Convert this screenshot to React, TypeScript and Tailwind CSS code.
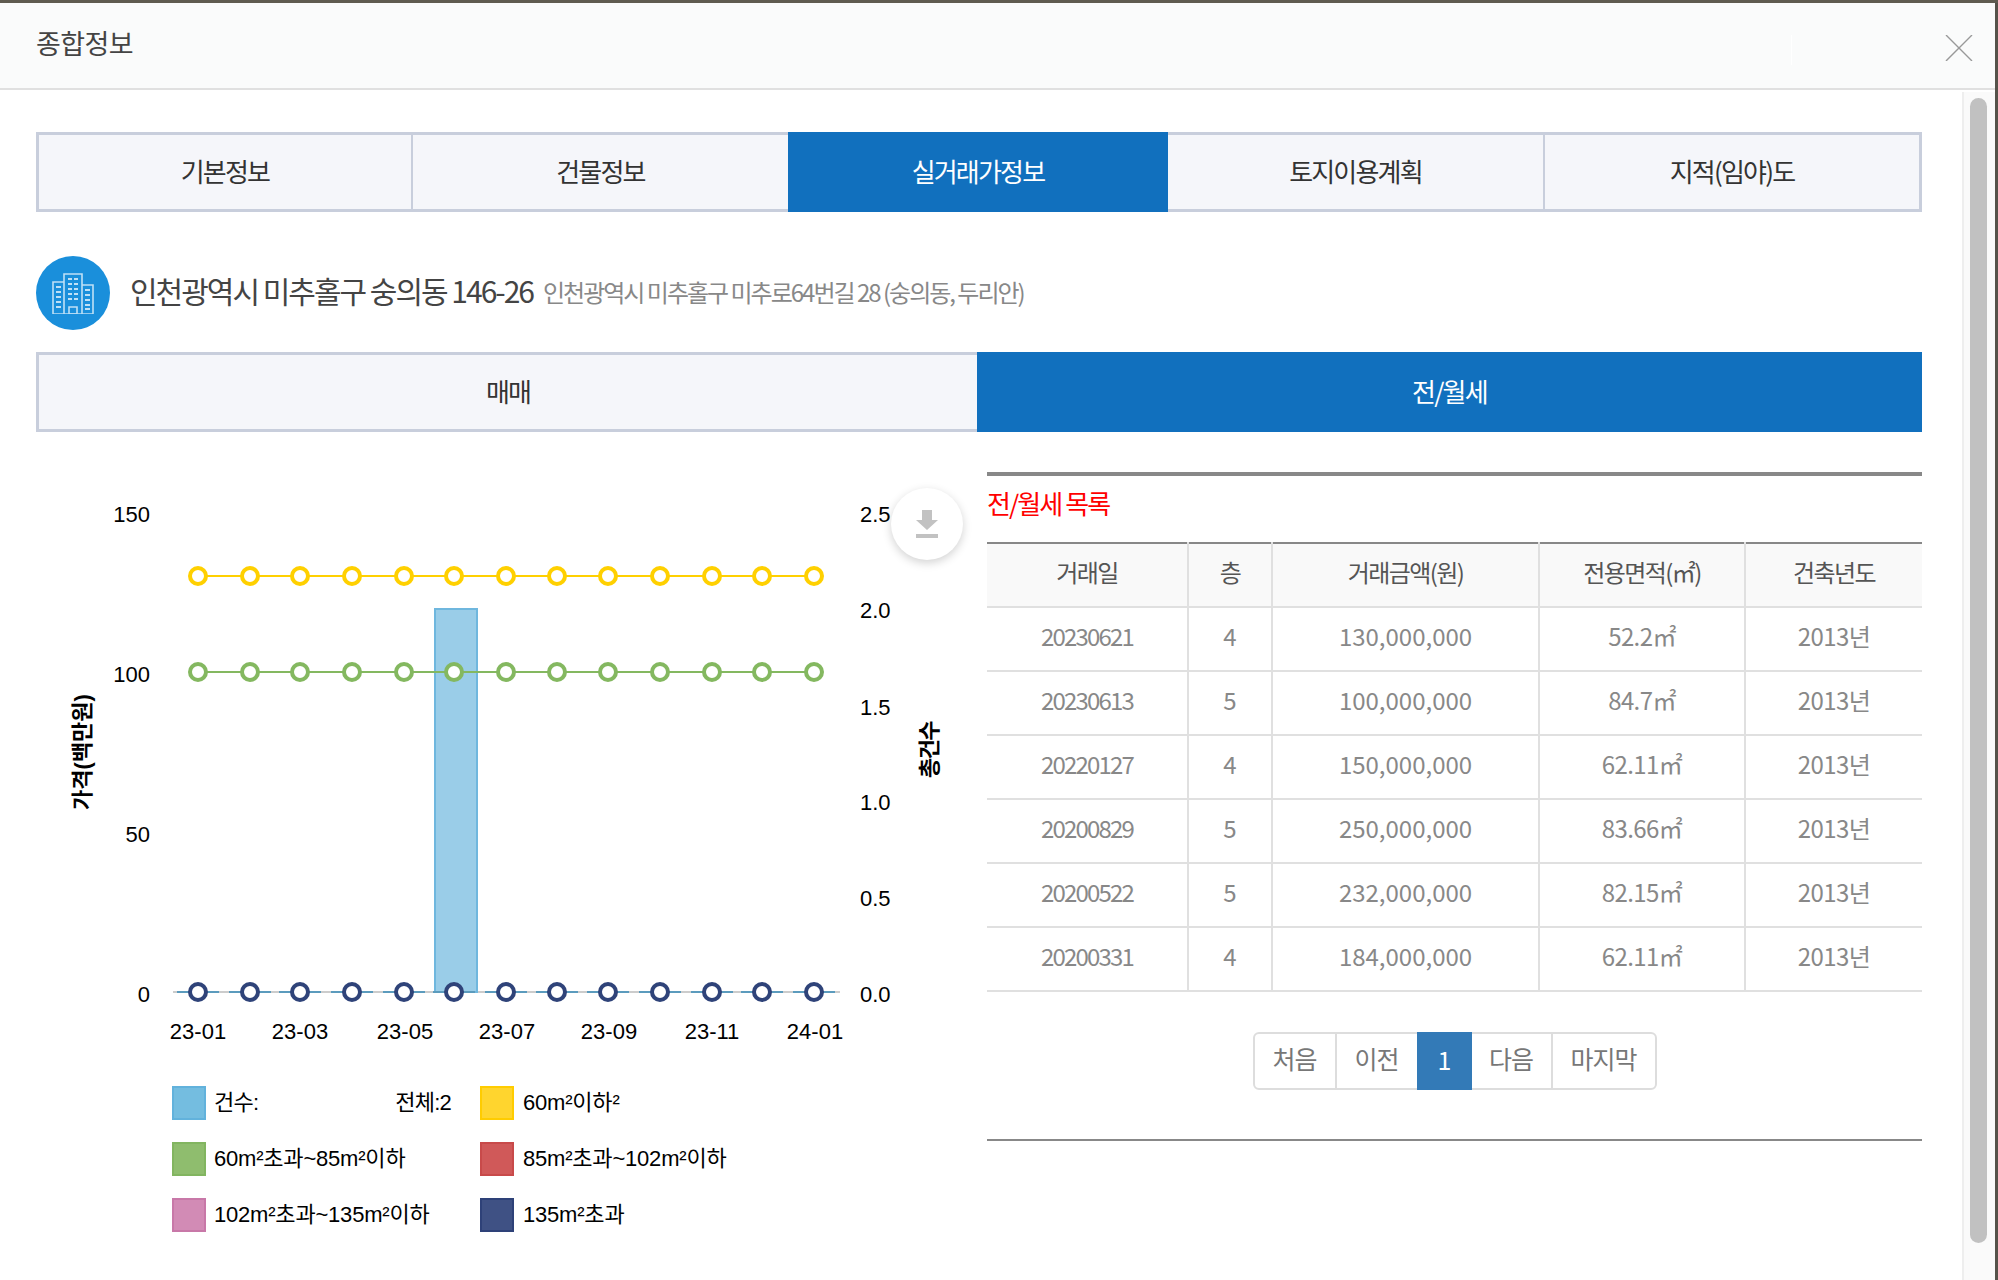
const kr = "font-['Noto_Sans_CJK_KR','Noto_Sans',sans-serif]";

const mainTabs = ['기본정보', '건물정보', '실거래가정보', '토지이용계획', '지적(임야)도'];

const rows = [
  ['20230621', '4', '130,000,000', '52.2㎡', '2013년'],
  ['20230613', '5', '100,000,000', '84.7㎡', '2013년'],
  ['20220127', '4', '150,000,000', '62.11㎡', '2013년'],
  ['20200829', '5', '250,000,000', '83.66㎡', '2013년'],
  ['20200522', '5', '232,000,000', '82.15㎡', '2013년'],
  ['20200331', '4', '184,000,000', '62.11㎡', '2013년'],
];

const pointX = [198, 250, 300, 352, 404, 454, 506, 557, 608, 660, 712, 762, 814];
const monthLabels: [number, string][] = [
  [198, '23-01'],
  [300, '23-03'],
  [405, '23-05'],
  [507, '23-07'],
  [609, '23-09'],
  [712, '23-11'],
  [815, '24-01'],
];

const Series = ({ y, color }: { y: number; color: string }) => (
  <g>
    <line x1={198} x2={814} y1={y} y2={y} stroke={color} strokeWidth={2} />
    {pointX.map((x) => (
      <circle key={x} cx={x} cy={y} r={8} fill="#fff" stroke={color} strokeWidth={4} />
    ))}
  </g>
);

const Chart = () => (
  <svg
    viewBox="36 472 951 600"
    className="block w-[951px] h-[600px] font-['Liberation_Sans','Noto_Sans_CJK_KR',sans-serif]"
  >
    {[
      [514, '150'],
      [674, '100'],
      [834, '50'],
      [994, '0'],
    ].map(([y, t]) => (
      <text key={t} x={150} y={y} fontSize={22} textAnchor="end" dominantBaseline="central" fill="#000">
        {t}
      </text>
    ))}
    {[
      [514, '2.5'],
      [610, '2.0'],
      [707, '1.5'],
      [802, '1.0'],
      [898, '0.5'],
      [994, '0.0'],
    ].map(([y, t]) => (
      <text key={t} x={860} y={y} fontSize={22} dominantBaseline="central" fill="#000">
        {t}
      </text>
    ))}
    <text
      transform="translate(82 752) rotate(-90)"
      fontSize={22}
      fontWeight={700}
      textAnchor="middle"
      dominantBaseline="central"
      letterSpacing={0}
    >
      가격(백만원)
    </text>
    <text
      transform="translate(929 750) rotate(-90)"
      fontSize={22}
      fontWeight={700}
      textAnchor="middle"
      dominantBaseline="central"
      letterSpacing={-1.5}
    >
      총건수
    </text>

    <line x1={173} x2={840} y1={992} y2={992} stroke="#ccc" strokeWidth={2} />
    <rect x={435} y={609} width={42} height={383} fill="#9acde8" stroke="#6fb7de" strokeWidth={2} />
    {pointX.map((x) => (
      <line key={x} x1={x - 21} x2={x + 21} y1={992} y2={992} stroke="#5b9bbd" strokeWidth={2} />
    ))}
    <Series y={576} color="#ffd000" />
    <Series y={672} color="#84b860" />
    {pointX.map((x) => (
      <circle key={x} cx={x} cy={992} r={8} fill="#fff" stroke="#2f4379" strokeWidth={4} />
    ))}
    {monthLabels.map(([x, t]) => (
      <text key={t} x={x} y={1031} fontSize={22} textAnchor="middle" dominantBaseline="central" fill="#000">
        {t}
      </text>
    ))}
  </svg>
);

const Swatch = ({ bg, border }: { bg: string; border: string }) => (
  <span className={`block w-[34px] h-[34px] border-2 shrink-0 ${bg} ${border}`} />
);

const Legend = () => (
  <div className="ml-[136px] mt-[14px] grid grid-cols-[308px_1fr] gap-y-[22px] text-[22px] leading-[34px] tracking-[-0.2px] text-black font-['Liberation_Sans','Noto_Sans_CJK_KR',sans-serif]">
    <div className="flex gap-[8px]">
      <Swatch bg="bg-[#74bde0]" border="border-[#62b2dc]" />
      <span className="w-[237px] flex justify-between">
        <span className="tracking-[-0.8px]">건수:</span>
        <span className="tracking-[-0.8px]">전체:2</span>
      </span>
    </div>
    <div className="flex gap-[9px]">
      <Swatch bg="bg-[#ffd52e]" border="border-[#ffcc00]" />
      <span>60m²이하²</span>
    </div>
    <div className="flex gap-[8px]">
      <Swatch bg="bg-[#8fbd6e]" border="border-[#82b560]" />
      <span>60m²초과~85m²이하</span>
    </div>
    <div className="flex gap-[9px]">
      <Swatch bg="bg-[#d05959]" border="border-[#c84a4a]" />
      <span>85m²초과~102m²이하</span>
    </div>
    <div className="flex gap-[8px]">
      <Swatch bg="bg-[#d28bb5]" border="border-[#c878a8]" />
      <span>102m²초과~135m²이하</span>
    </div>
    <div className="flex gap-[9px]">
      <Swatch bg="bg-[#3f5184]" border="border-[#2e4178]" />
      <span>135m²초과</span>
    </div>
  </div>
);

const BuildingIcon = () => (
  <span className="flex items-center justify-center w-[74px] h-[74px] rounded-full bg-[#1a8fdb] shrink-0">
    <svg width="42" height="41" viewBox="0 0 42 41" fill="none" stroke="#bfe0f6" strokeWidth="1.6">
      <path d="M12 1h18v40H12zM1 9h11v32H1zM30 12h11v29H30z" />
      <path d="M17 34h8v7h-8z" />
      <path
        d="M16 6h4M22 6h4M16 11h4M22 11h4M16 16h4M22 16h4M16 21h4M22 21h4M16 26h4M22 26h4M4 14h5M4 19h5M4 24h5M4 29h5M4 34h5M33 17h5M33 22h5M33 27h5M33 32h5M33 36h5"
        strokeWidth="2"
      />
    </svg>
  </span>
);

export default function App() {
  return (
    <div className={`w-[1998px] h-[1280px] overflow-hidden flex flex-col bg-white ${kr}`}>
      <div className="h-[3px] bg-[#5f5b50]" />
      <div className="flex flex-1 min-h-0">
        <div className="w-[1995px] flex flex-col">
          <header className="relative h-[87px] shrink-0 flex items-center justify-between pl-[36px] pr-[22px] bg-[#fafbfb] border-b-2 border-[#e0e0e0]">
            <h1 className="pb-[5px] text-[27px] font-normal text-[#444] tracking-[-0.6px]">종합정보</h1>
            <span className="absolute left-[1791px] top-[32px] h-[30px] w-px bg-white" />
            <svg width="28" height="26" viewBox="0 0 28 26" stroke="#999" strokeWidth="1.4" className="mt-[5px]">
              <path d="M1 0l26 26M27 0L1 26" />
            </svg>
          </header>

          <div className="flex flex-1 min-h-0">
            <main className="flex-1 pl-[36px] pr-[40px] pt-[42px]">
              <nav className="grid grid-cols-[374px_375px_380px_377px_1fr] h-[80px] border-[3px] border-[#c8cedc] bg-[#f5f6fa] text-[26px] text-[#333] tracking-[-1.8px]">
                {mainTabs.map((tab, i) =>
                  i === 2 ? (
                    <div key={tab} className="flex items-center justify-center -my-[3px] pb-[4px] bg-[#1170be] text-white">
                      {tab}
                    </div>
                  ) : (
                    <div
                      key={tab}
                      className={`flex items-center justify-center pb-[4px] ${i === 0 || i === 3 ? 'border-r-2 border-[#c8cedc]' : ''}`}
                    >
                      {tab}
                    </div>
                  )
                )}
              </nav>

              <div className="mt-[44px] h-[74px] flex items-center">
                <BuildingIcon />
                <span className="ml-[20px] pb-[5px] text-[30px] text-[#444] tracking-[-2px]">
                  인천광역시 미추홀구 숭의동 146-26
                </span>
                <span className="ml-[10px] pb-[3px] text-[24px] text-[#888] tracking-[-2px]">
                  인천광역시 미추홀구 미추로64번길 28 (숭의동, 두리안)
                </span>
              </div>

              <div className="mt-[22px] flex h-[80px] text-[26px] tracking-[-1.8px]">
                <div className="w-[941px] flex items-center justify-center pb-[4px] border-[3px] border-r-0 border-[#c8cedc] bg-[#f5f6fa] text-[#333]">
                  매매
                </div>
                <div className="flex-1 flex items-center justify-center pb-[4px] bg-[#1170be] text-white">전/월세</div>
              </div>

              <div className="mt-[40px] flex">
                <section className="relative w-[951px] shrink-0">
                  <Chart />
                  <button className="absolute left-[855px] top-[16px] w-[72px] h-[72px] rounded-full bg-white shadow-[0_3px_10px_rgba(0,0,0,0.18)] flex items-center justify-center">
                    <svg width="22" height="28" viewBox="0 0 22 28" fill="#c2c2c2">
                      <path d="M6 0h10v10h6L11 20 0 10h6zM0 24h22v4H0z" />
                    </svg>
                  </button>
                  <Legend />
                </section>

                <section className="flex-1">
                  <div className="border-t-4 border-[#888] pt-[8px] pb-[1px] text-[26px] leading-[38px] text-[#ff0000] tracking-[-1.9px]">
                    전/월세 목록
                  </div>
                  <table className="mt-[19px] w-full table-fixed border-collapse text-[24px]">
                    <colgroup>
                      <col className="w-[201px]" />
                      <col className="w-[84px]" />
                      <col className="w-[267px]" />
                      <col className="w-[206px]" />
                      <col />
                    </colgroup>
                    <thead>
                      <tr className="h-[64px] bg-[#f9f9f9] border-t-2 border-t-[#888] border-b-2 border-b-[#e0e0e0] text-[#555] tracking-[-1.6px]">
                        {['거래일', '층', '거래금액(원)', '전용면적(㎡)', '건축년도'].map((h, i) => (
                          <th key={h} className={`font-normal pb-[7px] ${i < 4 ? 'border-r-2 border-[#e0e0e0]' : ''}`}>
                            {h}
                          </th>
                        ))}
                      </tr>
                    </thead>
                    <tbody className="text-[#888]">
                      {rows.map((row) => (
                        <tr key={row[0]} className="h-[64px] border-b-2 border-[#e0e0e0]">
                          <td className="text-center pb-[7px] border-r-2 border-[#e0e0e0] tracking-[-1.8px]">{row[0]}</td>
                          <td className="text-center pb-[7px] border-r-2 border-[#e0e0e0]">{row[1]}</td>
                          <td className="text-center pb-[7px] border-r-2 border-[#e0e0e0]">{row[2]}</td>
                          <td className="text-center pb-[7px] border-r-2 border-[#e0e0e0] tracking-[-0.6px]">{row[3]}</td>
                          <td className="text-center pb-[7px] tracking-[-0.6px]">{row[4]}</td>
                        </tr>
                      ))}
                    </tbody>
                  </table>
                  <div className="mt-[40px] flex justify-center">
                    <div className="flex h-[58px] border-2 border-[#ddd] rounded-[6px] text-[25px] text-[#777] tracking-[-1px]">
                      <span className="w-[82px] pb-[4px] flex items-center justify-center border-r-2 border-[#ddd]">처음</span>
                      <span className="w-[80px] pb-[4px] flex items-center justify-center">이전</span>
                      <span className="w-[55px] pb-[2px] -my-[2px] flex items-center justify-center bg-[#337ab7] text-white">1</span>
                      <span className="w-[81px] pb-[4px] flex items-center justify-center border-r-2 border-[#ddd]">다음</span>
                      <span className="w-[102px] pb-[4px] flex items-center justify-center">마지막</span>
                    </div>
                  </div>
                  <div className="mt-[49px] border-t-2 border-[#888]" />
                </section>
              </div>
            </main>

            <div className="w-[33px] shrink-0 mt-[2px] border-l-2 border-[#eee] bg-[#fafafa] pl-[6px] pr-[8px] pt-[6px]">
              <div className="h-[1145px] rounded-full bg-[#c1c1c1]" />
            </div>
          </div>
        </div>
        <div className="w-[3px] bg-[#55524a]" />
      </div>
    </div>
  );
}
